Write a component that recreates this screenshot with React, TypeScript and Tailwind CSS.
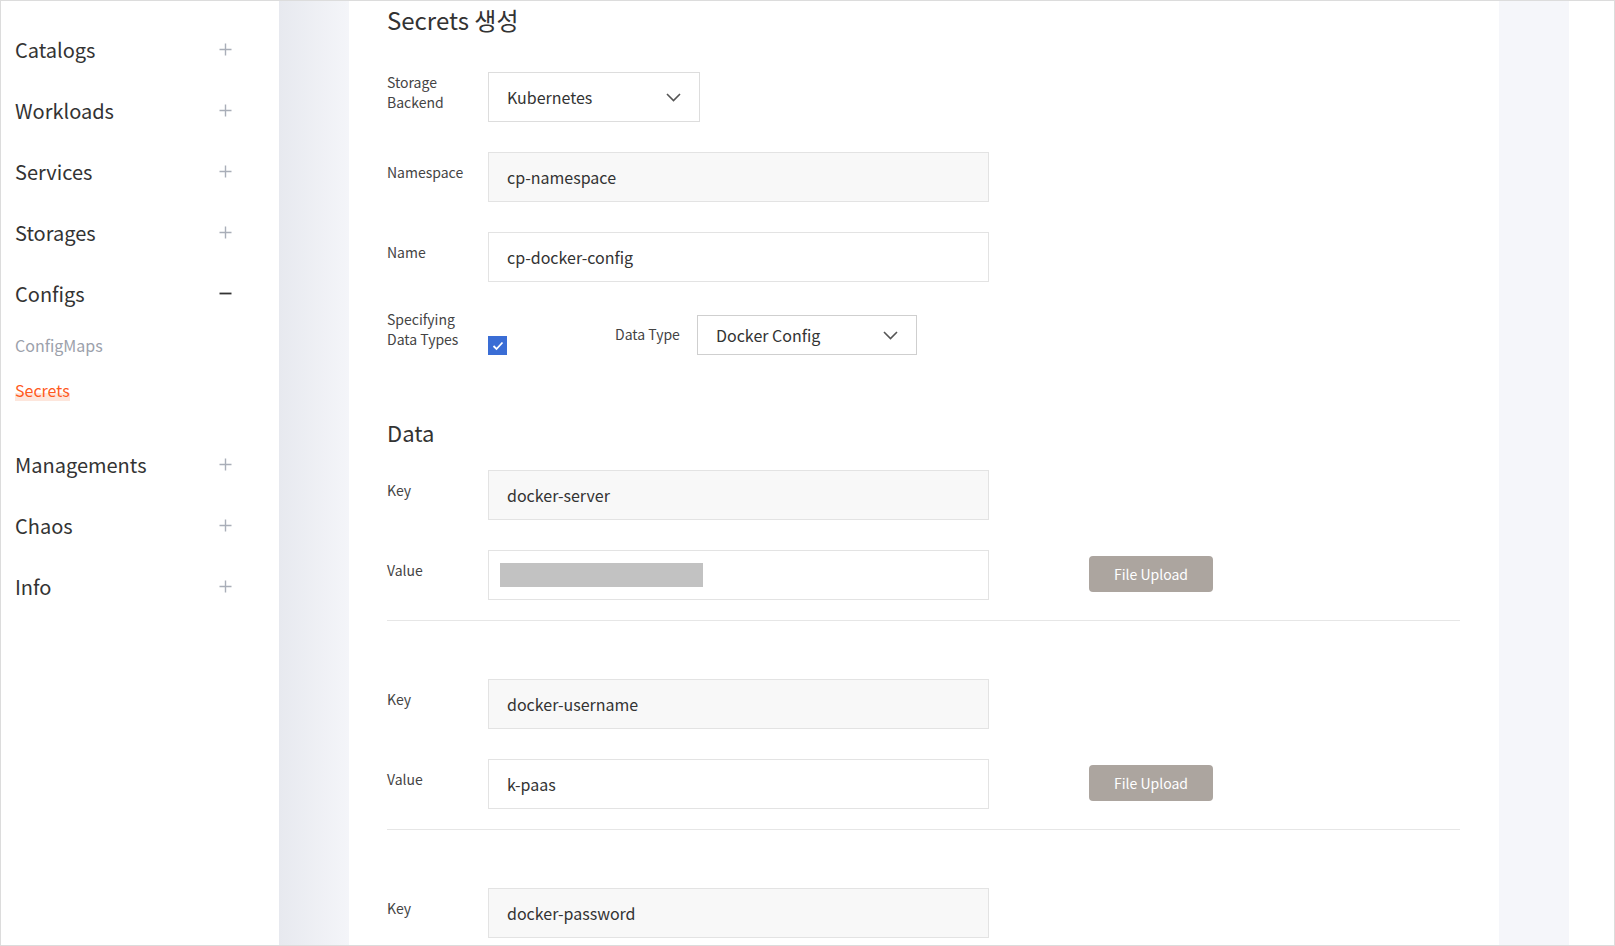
import React from "react";

const menu = ["Catalogs", "Workloads", "Services", "Storages"];
const menuAfter = ["Managements", "Chaos", "Info"];

const Plus = () => (
  <svg width="13" height="13" viewBox="0 0 13 13" className="text-[#a9aeb8]">
    <path d="M6.5 0.5v12M0.5 6.5h12" stroke="currentColor" strokeWidth="1.4" />
  </svg>
);

const Minus = () => (
  <svg width="13" height="13" viewBox="0 0 13 13" className="text-[#333]">
    <path d="M0.5 6.5h12" stroke="currentColor" strokeWidth="1.8" />
  </svg>
);

const Chevron = () => (
  <svg width="15" height="9" viewBox="0 0 15 9" className="text-[#555]">
    <path d="M1 1l6.5 6.5L14 1" fill="none" stroke="currentColor" strokeWidth="1.6" />
  </svg>
);

const MenuRow: React.FC<{ label: string; open?: boolean }> = ({ label, open }) => (
  <div className="h-[61px] flex items-center justify-between pl-[14px] pr-[47px]">
    <span className="text-[20px] text-[#333]">{label}</span>
    {open ? <Minus /> : <Plus />}
  </div>
);

const FieldLabel: React.FC<{ children: React.ReactNode; pt?: string }> = ({ children, pt = "pt-[10px]" }) => (
  <div className={`w-[101px] shrink-0 text-[14px] leading-[20px] text-[#444] ${pt}`}>{children}</div>
);

const TextBox: React.FC<{ value?: string; readOnly?: boolean; masked?: boolean }> = ({ value, readOnly, masked }) => (
  <div
    className={`w-[501px] h-[50px] flex items-center border border-[#e3e3e3] ${
      readOnly ? "bg-[#f8f8f8]" : "bg-white"
    } ${masked ? "pl-[11px]" : "pl-[18px]"} text-[16px] text-[#333]`}
  >
    {masked ? <div className="w-[203px] h-[24px] bg-[#c2c2c2]" /> : value}
  </div>
);

const UploadButton = () => (
  <button className="ml-[100px] mt-[6px] w-[124px] h-[36px] rounded-[4px] bg-[#aca59f] text-white text-[14px]">
    File Upload
  </button>
);

export default function App() {
  return (
    <div
      className="w-[1615px] h-[946px] border border-[#dcdcdc] flex overflow-hidden bg-white"
      style={{ fontFamily: '"Noto Sans CJK KR", "Noto Sans", sans-serif' }}
    >
      {/* sidebar */}
      <aside className="w-[278px] shrink-0 bg-white pt-[18px]">
        {menu.map((m) => (
          <MenuRow key={m} label={m} />
        ))}
        <MenuRow label="Configs" open />
        <div className="pl-[14px]">
          <div className="h-[42px] flex items-center text-[16px] text-[#9ca1ab]">ConfigMaps</div>
          <div className="h-[48px] flex items-center">
            <span className="inline-block text-[16px] leading-[22px] text-[#ff5a1e] bg-[linear-gradient(to_bottom,transparent_64%,#fde6dc_64%)]">
              Secrets
            </span>
          </div>
          <div className="h-[20px]" />
        </div>
        {menuAfter.map((m) => (
          <MenuRow key={m} label={m} />
        ))}
      </aside>

      <div className="w-[70px] shrink-0 bg-[linear-gradient(to_right,#e7e9ef,#f4f5f9)]" />

      {/* main */}
      <main className="w-[1150px] shrink-0 bg-white pl-[38px] pr-[39px]">
        <h1 className="mt-[4px] text-[24px] leading-[30px] text-[#333]">Secrets 생성</h1>

        <div className="flex mt-[37px]">
          <FieldLabel pt="pt-0">
            Storage
            <br />
            Backend
          </FieldLabel>
          <div className="w-[212px] h-[50px] border border-[#dddddd] flex items-center justify-between pl-[18px] pr-[18px] text-[16px] text-[#333]">
            Kubernetes
            <Chevron />
          </div>
        </div>

        <div className="flex mt-[30px]">
          <FieldLabel>Namespace</FieldLabel>
          <TextBox value="cp-namespace" readOnly />
        </div>

        <div className="flex mt-[30px]">
          <FieldLabel>Name</FieldLabel>
          <TextBox value="cp-docker-config" />
        </div>

        <div className="flex items-start mt-[27px] h-[46px]">
          <FieldLabel pt="pt-0">
            Specifying
            <br />
            Data Types
          </FieldLabel>
          <div className="mt-[27px] w-[19px] h-[19px] bg-[#3a6dd5] flex items-center justify-center">
            <svg width="12" height="10" viewBox="0 0 12 10">
              <path d="M1.5 5l3 3 6-6.5" fill="none" stroke="white" strokeWidth="1.8" />
            </svg>
          </div>
          <div className="ml-[108px] mt-[15px] w-[82px] text-[14px] leading-[20px] text-[#444]">Data Type</div>
          <div className="mt-[6px] w-[220px] h-[40px] border border-[#cfcfcf] flex items-center justify-between pl-[18px] pr-[18px] text-[16px] text-[#333]">
            Docker Config
            <Chevron />
          </div>
        </div>

        <h2 className="mt-[62px] text-[22px] leading-[30px] text-[#333]">Data</h2>

        <div className="flex mt-[23px]">
          <FieldLabel>Key</FieldLabel>
          <TextBox value="docker-server" readOnly />
        </div>
        <div className="flex mt-[30px]">
          <FieldLabel>Value</FieldLabel>
          <TextBox masked />
          <UploadButton />
        </div>
        <div className="mt-[20px] h-px bg-[#e6e6e6]" />

        <div className="flex mt-[58px]">
          <FieldLabel>Key</FieldLabel>
          <TextBox value="docker-username" readOnly />
        </div>
        <div className="flex mt-[30px]">
          <FieldLabel>Value</FieldLabel>
          <TextBox value="k-paas" />
          <UploadButton />
        </div>
        <div className="mt-[20px] h-px bg-[#e6e6e6]" />

        <div className="flex mt-[58px]">
          <FieldLabel>Key</FieldLabel>
          <TextBox value="docker-password" readOnly />
        </div>
      </main>

      <div className="w-[70px] shrink-0 bg-[#f5f6fa]" />
      <div className="flex-1 bg-white" />
    </div>
  );
}
